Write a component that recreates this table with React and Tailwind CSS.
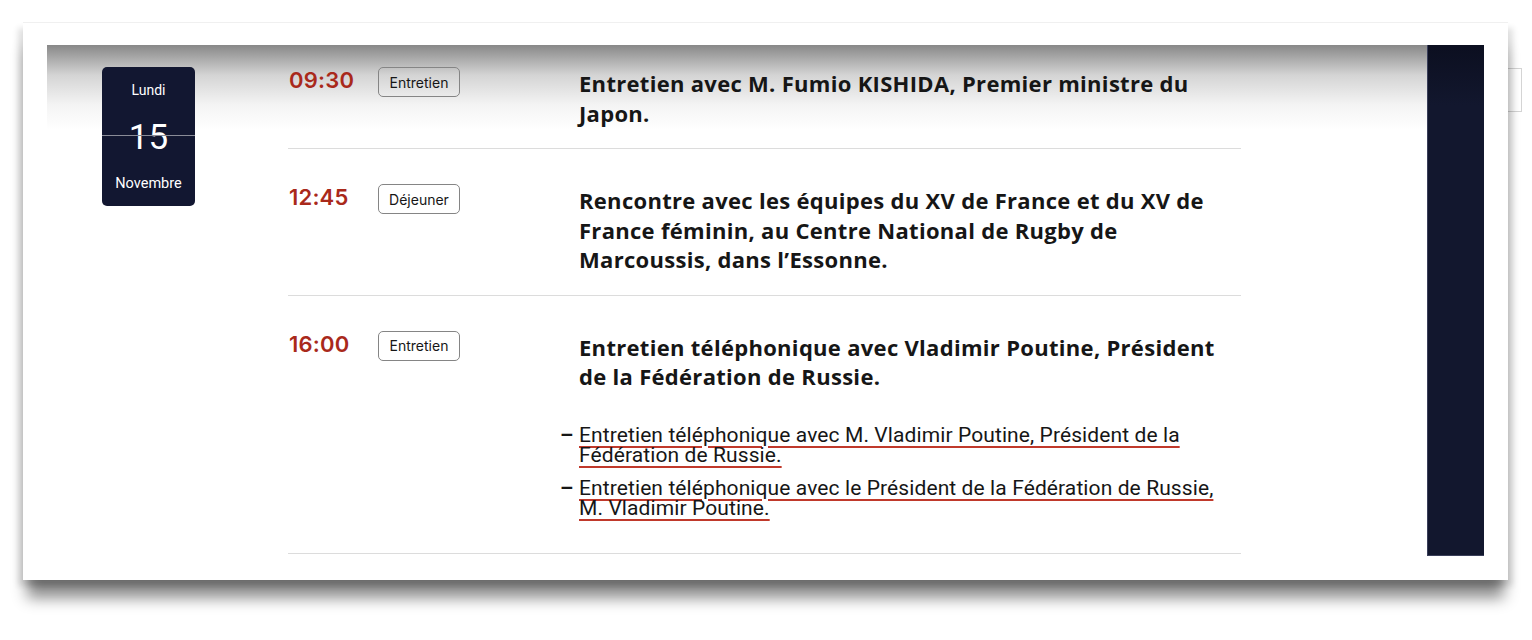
const events = [
  {
    time: '09:30',
    tag: 'Entretien',
    title: 'Entretien avec M. Fumio KISHIDA, Premier ministre du Japon.',
  },
  {
    time: '12:45',
    tag: 'Déjeuner',
    title:
      'Rencontre avec les équipes du XV de France et du XV de France féminin, au Centre National de Rugby de Marcoussis, dans l’Essonne.',
  },
  {
    time: '16:00',
    tag: 'Entretien',
    title: 'Entretien téléphonique avec Vladimir Poutine, Président de la Fédération de Russie.',
    links: [
      'Entretien téléphonique avec M. Vladimir Poutine, Président de la Fédération de Russie.',
      'Entretien téléphonique avec le Président de la Fédération de Russie, M. Vladimir Poutine.',
    ],
  },
];

function DateCard() {
  return (
    <div className="ml-[55px] mt-[22px] w-[93px] h-[139px] shrink-0 rounded-[5px] bg-[#121731] text-white flex flex-col items-center font-['Roboto',sans-serif] relative">
      <div className="mt-[13px] text-[14px] leading-[20px]">Lundi</div>
      <div className="mt-[18px] text-[35px] leading-[40px]">15</div>
      <div className="absolute left-0 right-0 top-[68px] h-px bg-[#8a8c98]" />
      <div className="mt-[16px] text-[14.5px] leading-[20px]">Novembre</div>
    </div>
  );
}

function EventRow({ event, first }) {
  return (
    <div className={`flex border-b border-[#dcdcdc] pb-[20px] ${first ? 'pt-[22px]' : 'pt-[35px]'}`}>
      <div className="w-[90px] shrink-0 pl-px text-[22px] leading-[26px] font-semibold text-[#a9291b] font-['Inter',sans-serif] tracking-[0.2px]">
        {event.time}
      </div>
      <div className="w-[201px] shrink-0">
        <span className="inline-flex items-center justify-center w-[82px] h-[30px] rounded-[5px] border border-[#858585] text-[14px] text-[#161616] font-['Inter',sans-serif]">
          {event.tag}
        </span>
      </div>
      <div className="w-[656px]">
        <div className="mt-[2px] text-[22px] leading-[29.5px] font-bold text-[#161616] font-['Open_Sans',sans-serif] tracking-[0.3px]">
          {event.title}
        </div>
        {event.links && (
          <ul className="mt-[33px] flex flex-col gap-[13px] pb-[15px] w-[645px]">
            {event.links.map((l) => (
              <li key={l} className="relative text-[21px] leading-[20px] text-[#161616] font-['Roboto',sans-serif] tracking-[0.1px]">
                <span className="absolute -left-[19px] top-0 font-bold">–</span>
                <span className="underline decoration-[#c0392b] decoration-[1.5px] underline-offset-[4px]">{l}</span>
              </li>
            ))}
          </ul>
        )}
      </div>
    </div>
  );
}

export default function App() {
  return (
    <div className="w-[1532px] h-[640px] bg-white relative overflow-hidden">
      <div className="absolute left-[1500px] top-[68px] w-[22px] h-[44px] border border-[#d4d4d4] bg-white" />
      <div className="absolute left-[23px] top-[22px] w-[1485px] h-[558px] bg-white border-t border-[#f0f0f0] shadow-[0_22px_14px_-4px_rgba(0,0,0,0.45),-5px_6px_6px_rgba(0,0,0,0.12),5px_6px_6px_rgba(0,0,0,0.12)] pl-[24px] pt-[22px]">
        <div className="flex h-[511px] w-[1437px]">
          <div className="flex flex-1 bg-[linear-gradient(to_bottom,#888888_0px,#d4d4d4_30px,#f4f4f4_60px,#ffffff_85px)]">
            <DateCard />
            <div className="ml-[93px] w-[953px] flex flex-col">
              {events.map((e, i) => (
                <EventRow key={e.time} event={e} first={i === 0} />
              ))}
            </div>
          </div>
          <div className="w-[57px] shrink-0 bg-[linear-gradient(to_bottom,#0c0f20,#12172e_60px)] border-l border-b border-[#3a3f5a]" />
        </div>
      </div>
    </div>
  );
}
